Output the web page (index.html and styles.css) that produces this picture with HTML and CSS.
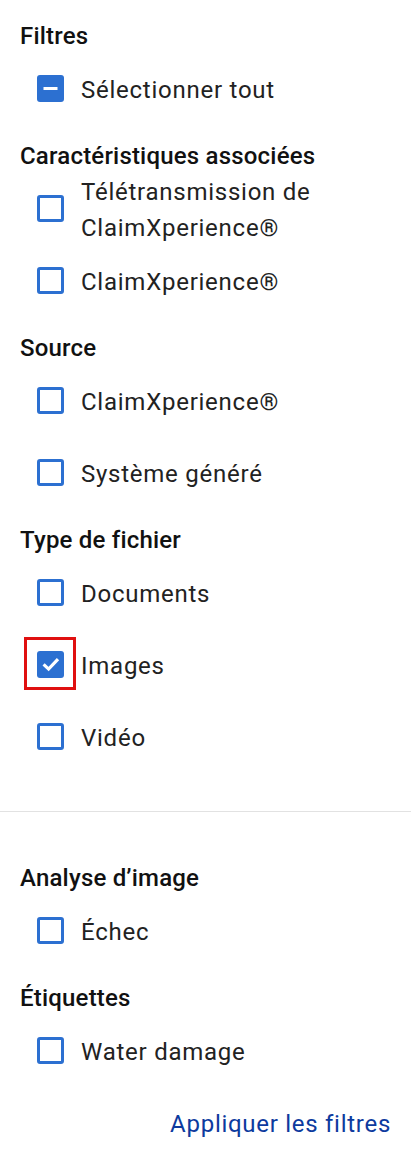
FILE: index.html
```
<!DOCTYPE html>
<html lang="fr">
<head>
<meta charset="utf-8">
<link rel="stylesheet" href="styles.css">
</head>
<body>
<div class="panel">
  <section class="group first">
    <h2 class="heading">Filtres</h2>
    <label class="item">
      <span class="box filled"><svg viewBox="0 0 27 27" width="27" height="27"><rect x="6.5" y="12" width="14" height="3" fill="#fff"/></svg></span>
      <span class="label">Sélectionner tout</span>
    </label>
  </section>

  <section class="group">
    <h2 class="heading">Caractéristiques associées</h2>
    <label class="item">
      <span class="box"></span>
      <span class="label">Télétransmission de<br>ClaimXperience®</span>
    </label>
    <label class="item">
      <span class="box"></span>
      <span class="label">ClaimXperience®</span>
    </label>
  </section>

  <section class="group">
    <h2 class="heading">Source</h2>
    <label class="item">
      <span class="box"></span>
      <span class="label">ClaimXperience®</span>
    </label>
    <label class="item">
      <span class="box"></span>
      <span class="label">Système généré</span>
    </label>
  </section>

  <section class="group">
    <h2 class="heading">Type de fichier</h2>
    <label class="item">
      <span class="box"></span>
      <span class="label">Documents</span>
    </label>
    <label class="item">
      <span class="box filled"><svg viewBox="0 0 27 27" width="27" height="27"><polyline points="6.6,13.4 11.6,18.1 21,8.2" fill="none" stroke="#fff" stroke-width="3.2"/></svg><span class="highlight"></span></span>
      <span class="label">Images</span>
    </label>
    <label class="item">
      <span class="box"></span>
      <span class="label">Vidéo</span>
    </label>
  </section>
</div>

<hr class="divider">

<div class="panel lower">
  <section class="group first">
    <h2 class="heading">Analyse d’image</h2>
    <label class="item">
      <span class="box"></span>
      <span class="label">Échec</span>
    </label>
  </section>

  <section class="group">
    <h2 class="heading">Étiquettes</h2>
    <label class="item">
      <span class="box"></span>
      <span class="label">Water damage</span>
    </label>
  </section>

  <div class="actions">
    <button class="apply" type="button">Appliquer les filtres</button>
  </div>
</div>
</body>
</html>
```

FILE: styles.css
```
* {
  box-sizing: border-box;
}

html, body {
  margin: 0;
  padding: 0;
  background: #ffffff;
}

body {
  font-family: Roboto, "Liberation Sans", Arial, sans-serif;
  color: #212121;
  width: 411px;
}

.panel {
  padding: 20px 20px 0 20px;
}

.panel.lower {
  padding-top: 50px;
}

.group {
  margin-top: 16px;
}

.group.first {
  margin-top: 0;
}

.heading {
  margin: 0;
  font-size: 24px;
  line-height: 32px;
  font-weight: 500;
  letter-spacing: 0.2px;
  color: #111111;
}

.item {
  display: flex;
  align-items: center;
  min-height: 72px;
  padding-left: 16.5px;
  cursor: pointer;
}

.box {
  position: relative;
  flex: 0 0 auto;
  width: 27px;
  height: 27px;
  border: 3px solid #2c70d1;
  border-radius: 3px;
  margin-right: 17.5px;
}

.box.filled {
  background: #2c70d1;
  border: none;
}

.box svg {
  display: block;
}

.highlight {
  position: absolute;
  left: -12.5px;
  top: -14px;
  width: 52px;
  height: 53px;
  border: 3px solid #e01010;
}

.label {
  font-size: 24px;
  line-height: 36px;
  letter-spacing: 0.75px;
  color: #222222;
  padding-top: 2px;
  margin-bottom: -2px;
}

.divider {
  margin: 39px 0 0 0;
  border: none;
  border-top: 1px solid #e2e2e2;
  height: 0;
}

.actions {
  display: flex;
  justify-content: flex-end;
  margin-top: 20px;
}

.apply {
  background: none;
  border: none;
  padding: 0;
  font-family: Roboto, "Liberation Sans", Arial, sans-serif;
  font-size: 24px;
  line-height: 36px;
  letter-spacing: 0.72px;
  color: #0d3a9e;
  cursor: pointer;
}
```
